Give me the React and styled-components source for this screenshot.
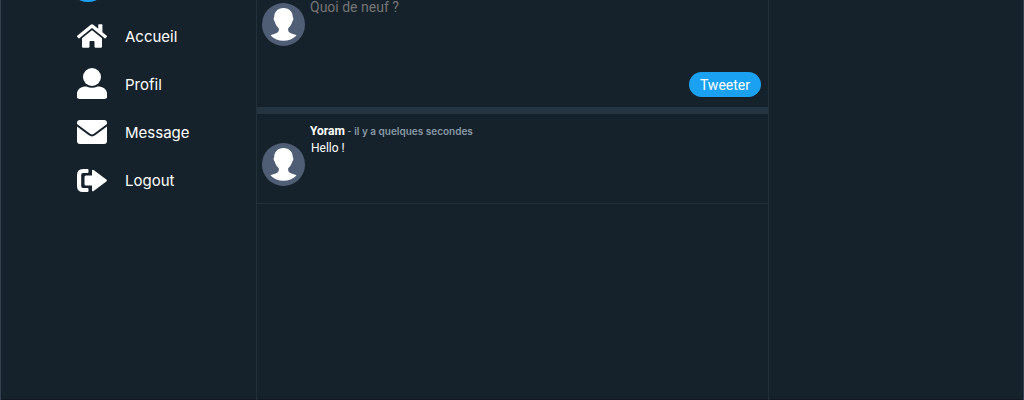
import React from "react";
import styled, { createGlobalStyle } from "styled-components";
import { FaHome } from "react-icons/fa";

const GlobalStyle = createGlobalStyle`
  * { box-sizing: border-box; }
  body {
    margin: 0;
    background: #16222b;
    color: #fff;
    font-family: Roboto, "Liberation Sans", sans-serif;
  }
`;

const Page = styled.div`
  display: grid;
  grid-template-columns: 1fr 2fr 1fr;
  min-height: 100vh;
  box-shadow: inset 1px 0 #33424e, inset -1px 0 #33424e, inset 0 -1px #111a22;
`;

const Sidebar = styled.header`
  padding-left: 77px;
  overflow: hidden;
`;

const Logo = styled.a`
  display: block;
  width: 40px;
  height: 40px;
  margin: -38px 0 0 -9px;
  border-radius: 50%;
  background: #1aa1f1;
`;

const Nav = styled.nav`
  display: flex;
  flex-direction: column;
  gap: 16px;
  padding-top: 19px;
`;

const NavLink = styled.a`
  display: flex;
  align-items: center;
  gap: 18px;
  height: 32px;
  color: #fff;
  font-family: Inter, "Liberation Sans", sans-serif;
  font-size: 15px;
  line-height: 20px;
  text-decoration: none;

  svg {
    flex: none;
    width: 30px;
    height: 32px;
    margin-bottom: 2px;
  }
`;

const Feed = styled.main`
  margin-right: -1px;
  border: solid #22303c;
  border-width: 0 1px;
`;

const Composer = styled.form`
  display: flex;
  flex-direction: column;
  height: 114px;
  padding: 0 7px 10px 5px;
  border-bottom: 7px solid #253441;
`;

const Row = styled.div`
  display: flex;
  flex: 1;
  gap: 5px;
`;

const AvatarImage = styled.svg`
  flex: none;
  width: 43px;
  height: 43px;
  margin-top: ${(p) => p.$top}px;
`;

const TweetBox = styled.textarea`
  flex: 1;
  min-width: 0;
  height: 60px;
  padding: 0;
  border: 0;
  outline: 0;
  resize: none;
  background: transparent;
  color: #fff;
  font: 14px/14px Roboto, "Liberation Sans", sans-serif;

  &::placeholder { color: #757575; opacity: 1; }
`;

const TweetButton = styled.button`
  align-self: flex-end;
  height: 25px;
  padding: 0 11px;
  border: 0;
  border-radius: 13px;
  background: #1aa1f1;
  color: #fff;
  font: 14px/20px Roboto, "Liberation Sans", sans-serif;
`;

const Tweet = styled.article`
  display: flex;
  gap: 5px;
  height: 90px;
  padding: 0 5px;
  border-bottom: 1px solid #22303c;
`;

const TweetContent = styled.div`
  padding-top: 9px;
`;

const TweetHeader = styled.div`
  color: #8899a6;
  font-size: 12px;
  line-height: 16px;
`;

const Author = styled.strong`
  color: #fff;
  font-weight: 700;
`;

const Time = styled.time`
  font-family: Inter, "Liberation Sans", sans-serif;
  font-size: 10px;
  font-weight: 600;
`;

const Message = styled.p`
  margin: 1px 0 0 1px;
  font-size: 12px;
  line-height: 16px;
`;

function Avatar({ top }) {
  return (
    <AvatarImage $top={top} viewBox="0 0 43 43" aria-hidden="true">
      <circle cx="21.5" cy="21.5" r="21.5" fill="#505e75" />
      <path
        d="M21.5 5C15.700 5 12.200 9 12.200 14.200C11.200 15 11.600 17.400 12.700 18.500C13.500 21.800 15.100 23.800 16.800 25.200C17.300 28.200 16 29.600 13.500 30.500C11.500 31.200 9.500 31.500 8.500 32.500C12 36 16.500 37.800 21.500 37.800S31 36 34.500 32.500C33.500 31.500 31.500 31.200 29.500 30.500C27 29.600 25.700 28.200 26.200 25.200C27.900 23.800 29.500 21.800 30.300 18.500C31.400 17.400 31.800 15 30.800 14.200C30.800 9 27.300 5 21.500 5Z"
        fill="#fff"
      />
    </AvatarImage>
  );
}

function UserIcon() {
  return (
    <svg viewBox="0 0 30 32" fill="#fff" aria-hidden="true">
      <circle cx="15" cy="9" r="9" />
      <path d="M7.500 18.500H9.500Q15 21 20.500 18.500H22.500Q30.300 19.500 30.300 27.500V28.500Q30.300 31 27.500 31H2.500Q-.3 31 -.3 28.500V27.500Q-.3 19.500 7.500 18.500Z" />
    </svg>
  );
}

function MessageIcon() {
  return (
    <svg viewBox="0 0 30 32" aria-hidden="true">
      <rect y="4" width="30" height="24" rx="3" fill="#fff" />
      <path d="M-1 8.500L12.500 18.500Q15 20.300 17.500 18.500L31 8.500" fill="none" stroke="#16222b" strokeWidth="2" />
    </svg>
  );
}

function LogoutIcon() {
  return (
    <svg viewBox="0 0 30 32" fill="#fff" aria-hidden="true">
      <path d="M6 5H10.500Q11.500 5 11.500 6V8Q11.500 9 10.500 9H6Q4.200 9 4.200 11V22Q4.200 24 6 24H10.500Q11.500 24 11.500 25V27Q11.500 28 10.500 28H6Q0 28 0 22V11Q0 5 6 5Z" />
      <path d="M9 11.500H15V7Q15 5 17 6.300L29.300 15.500Q30.500 16.500 29.300 17.500L17 26.700Q15 28 15 26V21.500H9Q7.500 21.500 7.500 20V13Q7.500 11.500 9 11.500Z" />
    </svg>
  );
}

export default function App() {
  return (
    <>
      <GlobalStyle />
      <Page>
        <Sidebar>
          <Logo href="#" aria-label="Accueil" />
          <Nav>
            <NavLink href="#"><FaHome />Accueil</NavLink>
            <NavLink href="#"><UserIcon />Profil</NavLink>
            <NavLink href="#"><MessageIcon />Message</NavLink>
            <NavLink href="#"><LogoutIcon />Logout</NavLink>
          </Nav>
        </Sidebar>
        <Feed>
          <Composer>
            <Row>
              <Avatar top={3} />
              <TweetBox aria-label="Quoi de neuf ?" placeholder="Quoi de neuf ?" />
            </Row>
            <TweetButton type="button">Tweeter</TweetButton>
          </Composer>
          <Tweet>
            <Avatar top={29} />
            <TweetContent>
              <TweetHeader>
                <Author>Yoram</Author> - <Time>il y a quelques secondes</Time>
              </TweetHeader>
              <Message>Hello !</Message>
            </TweetContent>
          </Tweet>
        </Feed>
      </Page>
    </>
  );
}
